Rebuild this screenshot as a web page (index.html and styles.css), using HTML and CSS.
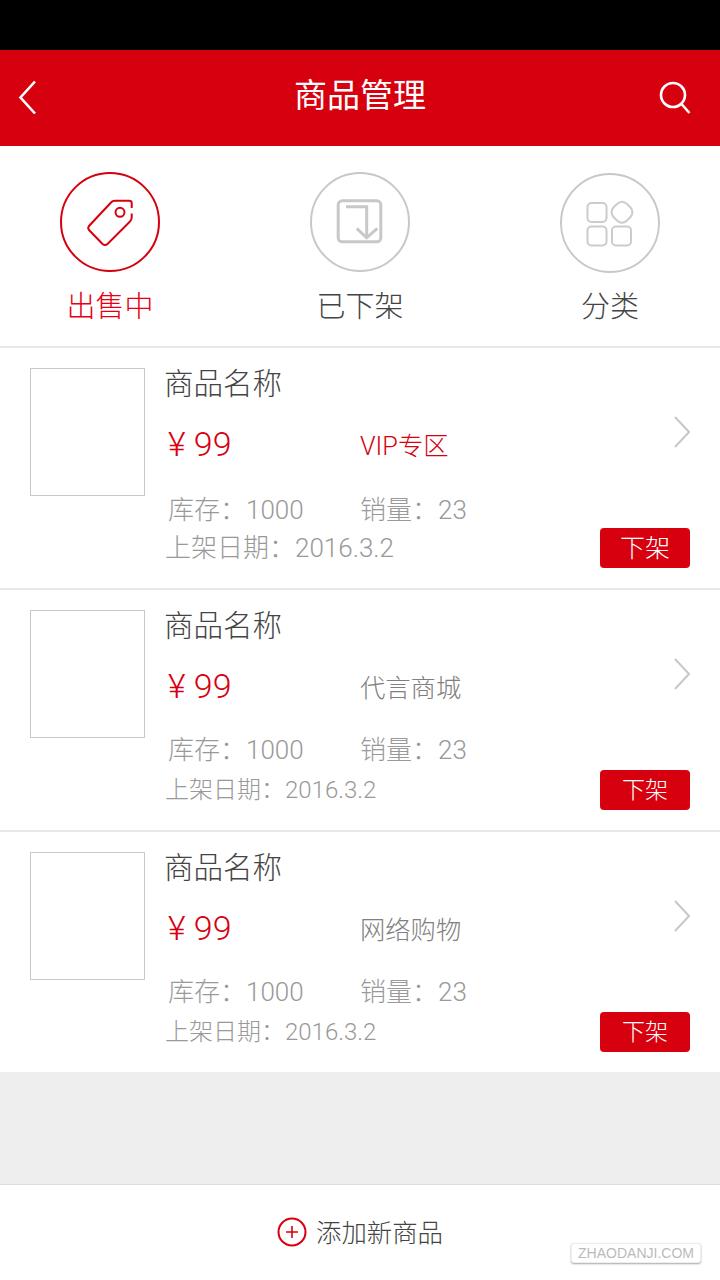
FILE: index.html
```html
<!DOCTYPE html>
<html lang="zh-CN">
<head>
<meta charset="utf-8">
<title>商品管理</title>
<link rel="stylesheet" href="styles.css">
</head>
<body>
<div class="page">
  <div class="statusbar"></div>
  <header class="header">
    <svg class="hicon" width="40" height="40" viewBox="0 0 40 40"><path d="M34 4.500 L19.500 20.500 L34 36.500" fill="none" stroke="#fff" stroke-width="2.600"/></svg>
    <h1 class="title">商品管理</h1>
    <svg class="hicon right" width="40" height="40" viewBox="0 0 40 40"><circle cx="18" cy="18" r="12" fill="none" stroke="#fff" stroke-width="2.600"/><path d="M26.500 27 L34.500 36" fill="none" stroke="#fff" stroke-width="2.600"/></svg>
  </header>
  <nav class="tabs">
    <div class="tab active">
      <div class="circle">
        <svg width="52" height="52" viewBox="0 0 52 52"><path d="M47.700 12 V7 Q47.700 4.700 45 4.700 H31 Q28.500 4.700 27 6.500 L5 30 Q3.500 32 5 34 L18.500 48 Q21 50 23.500 48 L45.500 26 Q47.700 24 47.700 21.500 V17.500" fill="none" stroke="#d7000f" stroke-width="2"/><circle cx="36" cy="16.300" r="4.500" fill="none" stroke="#d7000f" stroke-width="2"/></svg>
      </div>
      <span class="tab-label">出售中</span>
    </div>
    <div class="tab">
      <div class="circle">
        <svg width="52" height="52" viewBox="0 0 52 52"><rect x="4.200" y="4.800" width="42.600" height="41" rx="4" fill="none" stroke="#c8c8c8" stroke-width="3"/><path d="M12 10.700 H32.700 V41.300 M22.700 32.300 L32.700 41.800 L43.300 32.300" fill="none" stroke="#c8c8c8" stroke-width="3"/></svg>
      </div>
      <span class="tab-label">已下架</span>
    </div>
    <div class="tab">
      <div class="circle">
        <svg width="52" height="52" viewBox="0 0 52 52" fill="none" stroke="#cccccc" stroke-width="2"><rect x="3.500" y="6" width="19" height="19" rx="4"/><path d="M33 7 Q38 2.500 43 7 L46.500 10.500 Q50.500 15.300 46.500 20 L43 23.500 Q38 28 33 23.500 L29.500 20 Q25.500 15.300 29.500 10.500 Z"/><rect x="3.500" y="29.500" width="19" height="19" rx="4"/><rect x="28" y="29.500" width="19" height="19" rx="4"/></svg>
      </div>
      <span class="tab-label">分类</span>
    </div>
  </nav>
  <section class="list">
    <article class="item">
      <div class="thumb"></div>
      <div class="info">
        <div class="name">商品名称</div>
        <div class="price-row">
          <span class="price">¥ 99</span>
          <span class="tag hot">VIP专区</span>
          <svg class="chev" width="18" height="32" viewBox="0 0 18 32"><path d="M3 1 L17 16 L3 31" fill="none" stroke="#c8c8c8" stroke-width="2"/></svg>
        </div>
        <div class="stats"><span class="stat">库存：1000</span><span>销量：23</span></div>
        <div class="date-row"><span class="date big">上架日期：2016.3.2</span><span class="btn big">下架</span></div>
      </div>
    </article>
    <article class="item">
      <div class="thumb"></div>
      <div class="info">
        <div class="name">商品名称</div>
        <div class="price-row">
          <span class="price">¥ 99</span>
          <span class="tag">代言商城</span>
          <svg class="chev" width="18" height="32" viewBox="0 0 18 32"><path d="M3 1 L17 16 L3 31" fill="none" stroke="#c8c8c8" stroke-width="2"/></svg>
        </div>
        <div class="stats tight"><span class="stat">库存：1000</span><span>销量：23</span></div>
        <div class="date-row"><span class="date">上架日期：2016.3.2</span><span class="btn">下架</span></div>
      </div>
    </article>
    <article class="item last">
      <div class="thumb"></div>
      <div class="info">
        <div class="name">商品名称</div>
        <div class="price-row">
          <span class="price">¥ 99</span>
          <span class="tag">网络购物</span>
          <svg class="chev" width="18" height="32" viewBox="0 0 18 32"><path d="M3 1 L17 16 L3 31" fill="none" stroke="#c8c8c8" stroke-width="2"/></svg>
        </div>
        <div class="stats tight"><span class="stat">库存：1000</span><span>销量：23</span></div>
        <div class="date-row"><span class="date">上架日期：2016.3.2</span><span class="btn">下架</span></div>
      </div>
    </article>
  </section>
  <div class="spacer"></div>
  <footer class="footer">
    <svg class="add-icon" width="30" height="30" viewBox="0 0 30 30"><circle cx="15" cy="15" r="13.500" fill="none" stroke="#d7000f" stroke-width="2"/><path d="M9 15 H21 M15 9 V21" fill="none" stroke="#d7000f" stroke-width="1.600"/></svg>
    <span class="add">添加新商品</span>
    <span class="mark">ZHAODANJI.COM</span>
  </footer>
</div>
</body>
</html>
```
FILE: styles.css
```css
* { box-sizing: border-box; }
html, body { margin: 0; padding: 0; }
body {
  font-family: Roboto, "Noto Sans CJK SC", "Liberation Sans", sans-serif;
  font-weight: 300;
  background: #eee;
}
.page { width: 720px; height: 1280px; display: flex; flex-direction: column; position: relative; overflow: hidden; }
.statusbar { height: 50px; background: #000; flex: none; }
.header {
  height: 96px; flex: none; background: #d7000f; color: #fff;
  display: grid; grid-template-columns: 1fr auto 1fr; align-items: start;
  padding: 27px 25px 0 1px;
}
.hicon.right { justify-self: end; }
.title { margin: -5px 0 0 24px; font-size: 33px; line-height: 48px; font-weight: 400; }
.tabs {
  height: 202px; flex: none; background: #fff; border-bottom: 2px solid #e8e8e8;
  display: grid; grid-template-columns: repeat(3, 1fr); padding: 26px 0 0;
}
.tab { display: flex; flex-direction: column; align-items: center; }
.tab:first-child { padding-right: 20px; }
.tab:last-child { padding-left: 20px; padding-top: 1px; }
.tab:last-child .tab-label { margin-top: 14px; }
.circle {
  width: 100px; height: 100px; border-radius: 50%; border: 2px solid #c8c8c8;
  display: flex; align-items: center; justify-content: center;
}
.active .circle { border-color: #d7000f; }
.tab-label { font-size: 29px; line-height: 40px; margin-top: 15px; color: #444; }
.active .tab-label { color: #e60012; }
.list { flex: none; background: #fff; }
.item {
  height: 242px; display: flex; gap: 20px; padding: 20px 30px 0;
  border-bottom: 2px solid #e8e8e8;
}
.item.last { height: 240px; border-bottom: 0; }
.thumb { width: 115px; height: 128px; border: 1px solid #c8c8c8; flex: none; }
.info { flex: 1; display: flex; flex-direction: column; }
.name { height: 49px; margin-left: -1px; font-size: 29.500px; line-height: 33px; color: #444; }
.price-row { height: 73px; display: flex; align-items: flex-start; }
.price { width: 195px; padding-left: 3px; font-size: 34px; line-height: 54px; color: #d7000f; flex: none; }
.tag { flex: 1; font-size: 25.300px; line-height: 60px; color: #808080; }
.tag.hot { color: #d7000f; }
.chev { flex: none; margin-top: -1px; }
.stats { height: 38px; display: flex; padding-left: 3px; font-size: 26px; line-height: 40px; color: #999; }
.stats.tight { line-height: 36px; }
.stat { width: 192px; }
.date-row { display: flex; justify-content: space-between; align-items: flex-start; height: 40px; color: #999; }
.date { font-size: 24px; line-height: 41px; }
.date.big { font-size: 26px; line-height: 40px; }
.btn {
  width: 90px; height: 40px; border-radius: 4px; background: #d7000f; color: #fff;
  font-size: 23px; line-height: 42px; text-align: center;
}
.btn.big { font-size: 25px; }
.spacer { flex: 1; background: #eee; }
.footer {
  height: 96px; flex: none; background: #fff; border-top: 1px solid #ddd;
  display: flex; align-items: center; justify-content: center; gap: 9px;
  position: relative;
}
.add-icon { margin-top: -2px; }
.add { font-size: 25.400px; line-height: 30px; color: #444; margin-top: 1px; }
.mark {
  position: absolute; left: 571px; top: 58px; width: 130px; height: 20px;
  background: #fff; border-radius: 3px; border: 1px solid #eee;
  box-shadow: 0 1px 2px rgba(0,0,0,.35);
  font: 14px/18px "Liberation Sans", sans-serif; color: #bbb; text-align: center;
}
```
